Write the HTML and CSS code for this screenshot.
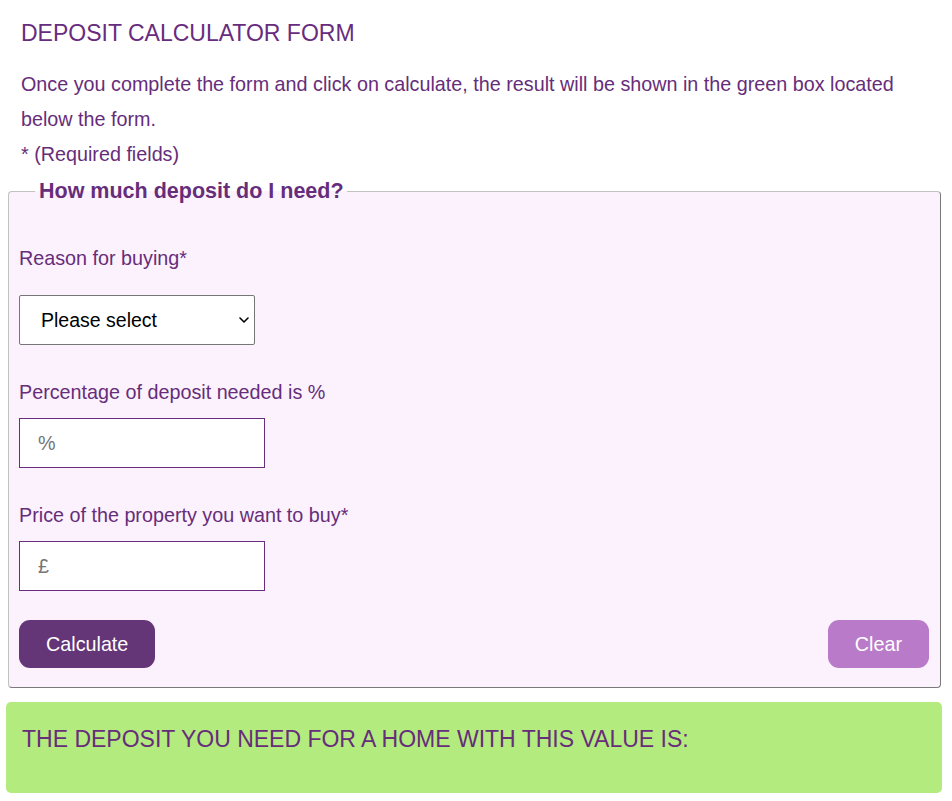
FILE: index.html
```html
<!DOCTYPE html>
<html lang="en">
<head>
<meta charset="utf-8">
<title>Deposit Calculator Form</title>
<link rel="stylesheet" href="styles.css">
</head>
<body>
<div class="page">
  <div class="intro">
    <h1 class="title">DEPOSIT CALCULATOR FORM</h1>
    <p class="lead">Once you complete the form and click on calculate, the result will be shown in the green box located below the form.<br>* (Required fields)</p>
  </div>
  <form class="calc" onsubmit="return false;">
    <fieldset class="box">
      <legend class="box-title">How much deposit do I need?</legend>
      <div class="fields">
        <div class="field field-select">
          <label class="label" for="reason">Reason for buying*</label>
          <div class="select-wrap">
            <select id="reason" class="select">
              <option>Please select</option>
              <option>First time buyer</option>
              <option>Home mover</option>
              <option>Buy to let</option>
            </select>
            <svg class="chevron" width="10" height="6" viewBox="0 0 10 6" aria-hidden="true"><path d="M1 1 L5 5 L9 1" fill="none" stroke="#000" stroke-width="1.6" stroke-linecap="round" stroke-linejoin="round"/></svg>
          </div>
        </div>
        <div class="field">
          <label class="label" for="pct">Percentage of deposit needed is %</label>
          <input id="pct" class="input" type="text" placeholder="%">
        </div>
        <div class="field">
          <label class="label" for="price">Price of the property you want to buy*</label>
          <input id="price" class="input" type="text" placeholder="£">
        </div>
      </div>
      <div class="actions">
        <button type="button" class="btn btn-primary">Calculate</button>
        <button type="reset" class="btn btn-secondary">Clear</button>
      </div>
    </fieldset>
  </form>
  <div class="result">THE DEPOSIT YOU NEED FOR A HOME WITH THIS VALUE IS:</div>
</div>
</body>
</html>
```
FILE: styles.css
```css
* { box-sizing: border-box; }
html, body { margin: 0; padding: 0; background: #ffffff; }
body {
  font-family: "Liberation Sans", Arial, Helvetica, sans-serif;
  color: #662d7a;
}
.page {
  padding: 0 11px 9px 8px;
}
.intro {
  padding-left: 13px;
}
.title {
  margin: 20px 0 0;
  font-size: 23px;
  line-height: 26px;
  font-weight: normal;
  color: #682c7e;
}
.lead {
  margin: 21px 0 0;
  font-size: 19.75px;
  line-height: 35px;
}
.calc { margin: 7px 0 0; }
.box {
  margin: 0;
  padding: 43px 10px 19px;
  border: 1px solid;
  border-color: #c2c2c2 #7a7a7a #7a7a7a #c2c2c2;
  border-radius: 4px;
  background: #fcf2fd;
  min-width: 0;
}
.box-title {
  margin-left: 16px;
  padding: 0 3px 0 4px;
  font-size: 21.5px;
  line-height: 24px;
  font-weight: bold;
  color: #662d7a;
}
.fields {
  display: flex;
  flex-direction: column;
  gap: 35px;
}
.field {
  display: flex;
  flex-direction: column;
  align-items: flex-start;
  gap: 14px;
}
.field-select { gap: 25px; }
.label {
  font-size: 19.75px;
  line-height: 24px;
  color: #662d7a;
}
.select-wrap {
  position: relative;
  width: 236px;
  height: 50px;
}
.select {
  -webkit-appearance: none;
  appearance: none;
  width: 236px;
  height: 50px;
  margin: 0;
  padding: 0 30px 0 21px;
  border: 1px solid #767676;
  border-radius: 2px;
  background: #ffffff;
  font-family: "Liberation Sans", Arial, Helvetica, sans-serif;
  font-size: 19.5px;
  color: #000000;
}
.chevron {
  position: absolute;
  right: 6px;
  top: 22px;
  pointer-events: none;
}
.input {
  width: 246px;
  height: 50px;
  margin: 0;
  padding: 0 18px;
  border: 1px solid #6a2c7c;
  border-radius: 0;
  background: #ffffff;
  font-family: "Liberation Sans", Arial, Helvetica, sans-serif;
  font-size: 19.75px;
  color: #333333;
  outline: none;
}
.input::placeholder { color: #757575; }
.actions {
  display: flex;
  justify-content: space-between;
  margin-top: 29px;
}
.btn {
  height: 48px;
  padding: 0 27px;
  border: 0;
  border-radius: 11px;
  font-family: "Liberation Sans", Arial, Helvetica, sans-serif;
  font-size: 19.75px;
  color: #ffffff;
  cursor: pointer;
}
.btn-primary { background: #643577; }
.btn-secondary { background: #b97bc9; margin-right: 1px; }
.result {
  margin: 14px -1px 0 -2px;
  height: 91px;
  padding: 23px 16px 0;
  border-radius: 5px;
  background: #b3eb7e;
  font-size: 23px;
  line-height: 28px;
  color: #662d7a;
}
```
